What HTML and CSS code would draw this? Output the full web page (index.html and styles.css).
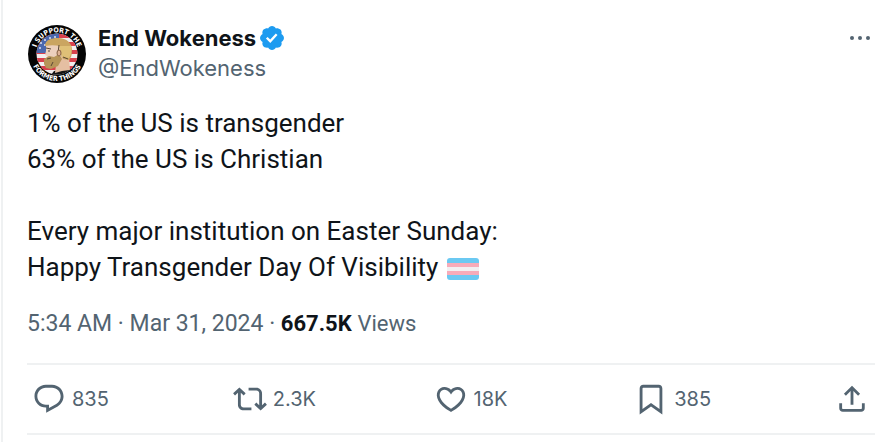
FILE: index.html
```html
<!DOCTYPE html>
<html lang="en">
<head>
  <meta charset="UTF-8" />
  <meta name="viewport" content="width=device-width, initial-scale=1.0" />
  <title>End Wokeness on X</title>
  <link rel="stylesheet" href="styles.css">
</head>
<body>

  <article class="post">

    <!-- Author -->
    <header class="post-header">
      <svg class="avatar" viewBox="0 0 58 58" role="img" aria-label="End Wokeness avatar">
        <defs>
          <clipPath id="flagClip"><circle cx="29" cy="29" r="20.5" /></clipPath>
          <path id="topArc" d="M7.5 29a21.5 21.5 0 0 1 43 0" />
          <path id="bottomArc" d="M2 29a27 27 0 0 0 54 0" />
        </defs>
        <circle cx="29" cy="29" r="29" fill="#050505" />
        <g clip-path="url(#flagClip)">
          <path fill="#f3eeee" d="M8 8h42v42H8z" />
          <path fill="#d9404c" d="M8 9h42v4H8zM8 17h42v4H8zM8 25h42v4H8zM8 33h42v4H8zM8 41h42v4H8z" />
          <path fill="#4b68ae" d="M8 8h23v20H8z" />
          <g fill="#dfe5f3">
            <circle cx="13" cy="18" r="1" /><circle cx="17" cy="15" r="1" /><circle cx="22" cy="13" r="1" />
            <circle cx="27" cy="12" r="1" /><circle cx="12" cy="23" r="1" /><circle cx="17" cy="20" r="1" />
          </g>
          <!-- shirt, neck, face, hair, beard -->
          <path fill="#151515" d="M23 50l3-4 9-2 12 0 3 6z" />
          <path fill="#e5bfa2" d="M29 31h12l1 14-8 1-7 2z" />
          <path fill="#ecd0bd" d="M18 20l14-1v16l-14 1 1-5-2-1 1-4z" />
          <path fill="#caa561" d="M17 21c0-6 6-8 13-8 9 0 14 5 14 12 0 5-1 8-3 10l-6-1-2-4-1-9c-5-1-10-1-15 0z" />
          <path fill="#dfc077" d="M31 21h12c1 5 0 9-2 12l-7-1z" />
          <path fill="#b69558" d="M16 34l5-3 5 1 5-3 3 5-4 7-7 3-5-1-2-4z" />
          <path fill="none" stroke="#594634" d="M18 23l5 1M19 34l4-1M20 26l2 0M31 20l-1 8M35 32l5 2M25 37l-2 4" />
          <ellipse cx="31" cy="28" rx="2" ry="3" fill="#dfb394" stroke="#876143" />
        </g>
        <text class="avatar-text"><textPath href="#topArc" startOffset="50%">I SUPPORT THE</textPath></text>
        <text class="avatar-text"><textPath href="#bottomArc" startOffset="50%">FORMER THINGS</textPath></text>
      </svg>

      <div class="author">
        <div class="name-row">
          <a class="name" href="#">End Wokeness</a>
          <svg class="verified" viewBox="0 0 22 22" role="img" aria-label="Verified account">
            <path d="M20.396 11c-.018-.646-.215-1.275-.57-1.816-.354-.54-.852-.972-1.438-1.246.223-.607.27-1.264.14-1.897-.131-.634-.437-1.218-.882-1.687-.47-.445-1.053-.75-1.687-.882-.633-.13-1.29-.083-1.897.14-.273-.587-.704-1.086-1.245-1.44S11.647 1.62 11 1.604c-.646.017-1.273.213-1.813.568s-.969.854-1.24 1.44c-.608-.223-1.267-.272-1.902-.14-.635.13-1.22.436-1.69.882-.445.47-.749 1.055-.878 1.688-.13.633-.08 1.29.144 1.896-.587.274-1.087.705-1.443 1.245-.356.54-.555 1.17-.574 1.817.02.647.218 1.276.574 1.817.356.54.856.972 1.443 1.245-.224.606-.274 1.263-.144 1.896.13.634.433 1.218.877 1.688.47.443 1.054.747 1.687.878.633.132 1.29.084 1.897-.136.274.586.705 1.084 1.246 1.439.54.354 1.17.551 1.816.569.647-.016 1.276-.213 1.817-.567s.972-.854 1.245-1.44c.604.239 1.266.296 1.903.164.636-.132 1.22-.447 1.68-.907.46-.46.776-1.044.908-1.681s.075-1.299-.165-1.903c.586-.274 1.084-.705 1.439-1.246.354-.54.551-1.17.569-1.816zM9.662 14.85l-3.429-3.428 1.293-1.302 2.072 2.072 4.4-4.794 1.347 1.246z" />
          </svg>
        </div>
        <a class="handle" href="#">@EndWokeness</a>
      </div>

      <button class="more" type="button" aria-label="More">
        <svg class="more-icon" viewBox="0 0 30 30">
          <circle cx="7" cy="15" r="2" /><circle cx="15" cy="15" r="2" /><circle cx="23" cy="15" r="2" />
        </svg>
      </button>
    </header>

    <!-- Text -->
    <div class="post-text">
      <p>1% of the US is transgender<br>63% of the US is Christian</p>
      <p>Every major institution on Easter Sunday:<br>Happy Transgender Day Of Visibility
        <svg class="flag" viewBox="0 0 32 22" role="img" aria-label="Transgender flag">
          <rect width="32" height="22" rx="3" fill="#6bc9f2" />
          <path fill="#f7abb9" d="M0 5h32v12H0z" />
          <path fill="#f1f0f2" d="M0 9h32v4H0z" />
        </svg>
      </p>
    </div>

    <div class="meta">
      <a href="#"><time datetime="2024-03-31T05:34">5:34 AM · Mar 31, 2024</time></a> · <strong>667.5K</strong> <span class="views">Views</span>
    </div>

    <!-- Actions -->
    <div class="actions">
      <button class="action" type="button" aria-label="835 replies">
        <svg class="icon" viewBox="0 0 24 24"><path d="M1.751 10c0-4.42 3.584-8 8.005-8h4.366c4.49 0 8.129 3.64 8.129 8.13 0 2.96-1.607 5.68-4.196 7.11l-8.054 4.46v-3.69h-.067c-4.49.1-8.183-3.51-8.183-8.01zm8.005-6c-3.317 0-6.005 2.69-6.005 6 0 3.37 2.77 6.08 6.138 6.01l.351-.01h1.761v2.3l5.087-2.81c1.951-1.08 3.163-3.13 3.163-5.36 0-3.39-2.744-6.13-6.129-6.13H9.756z" /></svg>
        <span>835</span>
      </button>
      <button class="action" type="button" aria-label="2.3K reposts">
        <svg class="icon" viewBox="0 0 24 24"><path d="M4.5 3.88l4.432 4.14-1.364 1.46L5.5 7.55V16c0 1.1.896 2 2 2H13v2H7.5c-2.209 0-4-1.79-4-4V7.55L1.432 9.48.068 8.02 4.5 3.88zM16.5 6H11V4h5.5c2.209 0 4 1.79 4 4v8.45l2.068-1.93 1.364 1.46-4.432 4.14-4.432-4.14 1.364-1.46 2.068 1.93V8c0-1.1-.896-2-2-2z" /></svg>
        <span>2.3K</span>
      </button>
      <button class="action" type="button" aria-label="18K likes">
        <svg class="icon" viewBox="0 0 24 24"><path d="M16.697 5.5c-1.222-.06-2.679.51-3.89 2.16l-.805 1.09-.806-1.09C9.984 6.01 8.526 5.44 7.304 5.5c-1.243.07-2.349.78-2.91 1.91-.552 1.12-.633 2.78.479 4.82 1.074 1.97 3.257 4.27 7.129 6.61 3.87-2.34 6.052-4.64 7.126-6.61 1.111-2.04 1.03-3.7.477-4.82-.561-1.13-1.666-1.84-2.908-1.91zm4.187 7.69c-1.351 2.48-4.001 5.12-8.379 7.67l-.503.3-.504-.3c-4.379-2.55-7.029-5.19-8.382-7.67-1.36-2.5-1.41-4.86-.514-6.67.887-1.79 2.647-2.91 4.601-3.01 1.651-.09 3.368.56 4.798 2.01 1.429-1.45 3.146-2.1 4.796-2.01 1.954.1 3.714 1.22 4.601 3.01.896 1.81.846 4.17-.514 6.67z" /></svg>
        <span>18K</span>
      </button>
      <button class="action" type="button" aria-label="385 bookmarks">
        <svg class="icon" viewBox="0 0 24 24"><path d="M4 4.5C4 3.12 5.119 2 6.5 2h11C18.881 2 20 3.12 20 4.5v18.44l-8-5.71-8 5.71V4.5zM6.5 4c-.276 0-.5.22-.5.5v14.56l6-4.29 6 4.29V4.5c0-.28-.224-.5-.5-.5h-11z" /></svg>
        <span>385</span>
      </button>
      <button class="action" type="button" aria-label="Share">
        <svg class="icon" viewBox="0 0 24 24"><path d="M12 2.59l5.7 5.7-1.41 1.42L13 6.41V16h-2V6.41l-3.3 3.3-1.41-1.42L12 2.59zM21 15l-.02 3.51c0 1.38-1.12 2.49-2.5 2.49H5.5C4.11 21 3 19.88 3 18.5V15h2v3.5c0 .28.22.5.5.5h12.98c.28 0 .5-.22.5-.5L19 15h2z" /></svg>
      </button>
    </div>

  </article>

</body>
</html>
```
FILE: styles.css
```css
* {
  box-sizing: border-box;
}

body {
  margin: 0 0 0 1px;
  background: #fff;
  color: #0f1419;
  font-family: Inter, "Liberation Sans", sans-serif;
}

a {
  color: inherit;
  text-decoration: none;
}

button {
  padding: 0;
  border: none;
  background: none;
  color: inherit;
  font: inherit;
  cursor: pointer;
}

svg {
  display: block;
  flex-shrink: 0;
}

.post {
  min-height: 100vh;
  padding: 23px 9px 0 24px;
  border-left: 2px solid #eff1f2;
}

/* Author */
.post-header {
  display: flex;
  align-items: flex-end;
  gap: 12px;
}

.avatar {
  width: 58px;
  height: 58px;
  margin-left: 1px;
}

.avatar-text {
  fill: #fff;
  font-family: "Liberation Sans Narrow", "DejaVu Sans Condensed", sans-serif;
  font-size: 7px;
  font-weight: bold;
  text-anchor: middle;
}

.author {
  flex: 1;
  font-size: 22px;
  line-height: 30px;
}

.name-row {
  display: flex;
  align-items: center;
  gap: 2px;
}

.name {
  font-weight: 700;
}

.verified {
  width: 28px;
  height: 28px;
  fill: #1d9bf0;
}

.handle {
  color: #536471;
}

.more {
  align-self: flex-start;
}

.more-icon {
  width: 30px;
  height: 30px;
  fill: #536471;
}

/* Text */
.post-text {
  margin-top: 22px;
  font-family: Roboto, "Liberation Sans", sans-serif;
  font-size: 26px;
  line-height: 36px;
}

.post-text p {
  margin: 0 0 36px;
}

.post-text p:last-child {
  margin-bottom: 0;
}

.flag {
  display: inline-block;
  width: 32px;
  height: 22px;
  margin-left: 2px;
  vertical-align: -4px;
}

.meta {
  padding: 24px 0;
  color: #536471;
  font-family: Roboto, "Liberation Sans", sans-serif;
  font-size: 23px;
  line-height: 30px;
}

.meta strong {
  color: #0f1419;
  font-size: 22px;
}

.views {
  font-size: 22px;
}

/* Actions */
.actions {
  display: grid;
  grid-template-columns: repeat(4, 1fr) auto;
  padding: 17px 6px 17px 5px;
  border-top: 2px solid #eff1f2;
  border-bottom: 2px solid #eff1f2;
  color: #536471;
  font-size: 20px;
}

.action {
  display: flex;
  align-items: center;
  gap: 6px;
}

.icon {
  width: 34px;
  height: 34px;
  fill: currentColor;
}
```
